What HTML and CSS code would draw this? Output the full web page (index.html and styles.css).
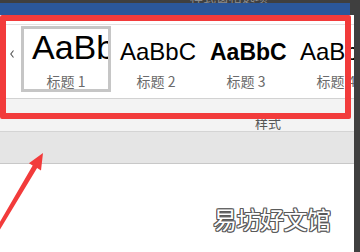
FILE: index.html
```html
<!DOCTYPE html>
<html lang="zh-CN">
<head>
  <meta charset="UTF-8">
  <title>样式</title>
  <link rel="stylesheet" href="styles.css">
</head>
<body>
  <div class="screen">
    <div class="main">
      <div class="caption"><span>样式窗格选项</span></div>
      <div class="titlebar"></div>
      <div class="ribbon">
        <div class="gallery">
          <div class="scroll-left">
            <svg width="4" height="8" viewBox="0 0 4 8"><path d="M3.5 0.5 L0.8 4 L3.5 7.5" fill="none" stroke="#555" stroke-width="1.1"/></svg>
          </div>
          <div class="style-item selected">
            <div class="sample s1">AaBbCc</div>
            <div class="label">标题 1</div>
          </div>
          <div class="style-item">
            <div class="sample s2">AaBbC</div>
            <div class="label">标题 2</div>
          </div>
          <div class="style-item">
            <div class="sample s3">AaBbC</div>
            <div class="label">标题 3</div>
          </div>
          <div class="style-item">
            <div class="sample s2">AaBbC</div>
            <div class="label">标题 4</div>
          </div>
        </div>
        <div class="group-label">样式</div>
      </div>
      <div class="toolbar"></div>
      <div class="doc"></div>
    </div>

    <!-- annotations drawn over the screenshot -->
    <div class="highlight"></div>
    <svg class="arrow" width="60" height="100" viewBox="0 140 60 100">
      <polygon points="43,153 41,170.5 37.1,168.1 -0.3,230 -3.7,228 32.7,165.5 28.9,163.3" fill="#f23b3b"/>
    </svg>
    <div class="watermark">易坊好文馆</div>
  </div>
</body>
</html>
```

FILE: styles.css
```css
body {
  margin: 0;
  background-color: #3f3f3f;
  font-family: "Noto Sans CJK SC", "Liberation Sans", sans-serif;
}
.screen {
  position: relative;
  width: 360px;
  height: 252px;
  overflow: hidden;
}
.main {
  width: 354px;
  height: 252px;
  display: flex;
  flex-direction: column;
}
.caption {
  height: 3px;
  overflow: hidden;
  padding-left: 190px;
  color: #8c8c8c;
  font-size: 13px;
  line-height: 13px;
}
.caption span {
  display: block;
  margin-top: -10px;
}
.titlebar {
  height: 12px;
  margin-right: 4px;
  background-color: #2b579a;
}
.ribbon {
  background-color: #f3f3f3;
  border-bottom: 1px solid #d4d4d4;
}
.gallery {
  display: flex;
  align-items: flex-start;
  height: 74px;
  border-top: 9px solid #fff;
  border-bottom: 1px solid #d2d2d2;
  box-shadow: inset 0 1px 0 #e2e2e2;
  background-color: #fff;
  overflow: hidden;
}
.scroll-left {
  box-sizing: border-box;
  flex: 0 0 21px;
  padding: 26px 0 0 10px;
  line-height: 0;
}
.style-item {
  box-sizing: border-box;
  flex: 0 0 90px;
  width: 90px;
  height: 66px;
  margin-top: 2px;
  border: 3px solid transparent;
}
.style-item.selected {
  border-color: #c6c6c6;
}
.sample {
  box-sizing: border-box;
  height: 44px;
  padding-left: 6px;
  overflow: hidden;
  white-space: nowrap;
  color: #000;
  font-family: "Liberation Sans", sans-serif;
  line-height: 36px;
}
.s1 {
  font-size: 34px;
  padding-top: 0;
  padding-left: 8px;
}
.s2 {
  font-size: 24px;
  padding-top: 5px;
}
.s3 {
  font-size: 23px;
  font-weight: bold;
  padding-top: 5px;
}
.label {
  height: 16px;
  line-height: 16px;
  font-size: 14px;
  color: #6a6a6a;
  text-align: center;
  white-space: nowrap;
}
.group-label {
  height: 16px;
  padding: 16px 0 0 255px;
  line-height: 16px;
  font-size: 13px;
  color: #555;
}
.toolbar {
  height: 31px;
  background-color: #e5e5e5;
  border-bottom: 1px solid #c8c8c8;
}
.doc {
  flex: 1;
  background-color: #fff;
}
.highlight {
  position: absolute;
  left: 0;
  top: 15px;
  width: 351px;
  height: 104px;
  box-sizing: border-box;
  border: 6px solid #f23b3b;
  border-radius: 2px;
}
.arrow {
  position: absolute;
  left: 0;
  top: 140px;
}
.watermark {
  position: absolute;
  left: 213px;
  top: 207px;
  font-size: 24px;
  line-height: 24px;
  color: #fff;
  letter-spacing: -0.5px;
  text-shadow: 1px 0 0 #5a5a5a, -1px 0 0 #5a5a5a, 0 1px 0 #5a5a5a, 0 -1px 0 #5a5a5a,
    1px 1px 0 #5a5a5a, -1px -1px 0 #5a5a5a, 1px -1px 0 #5a5a5a, -1px 1px 0 #5a5a5a;
}
```
